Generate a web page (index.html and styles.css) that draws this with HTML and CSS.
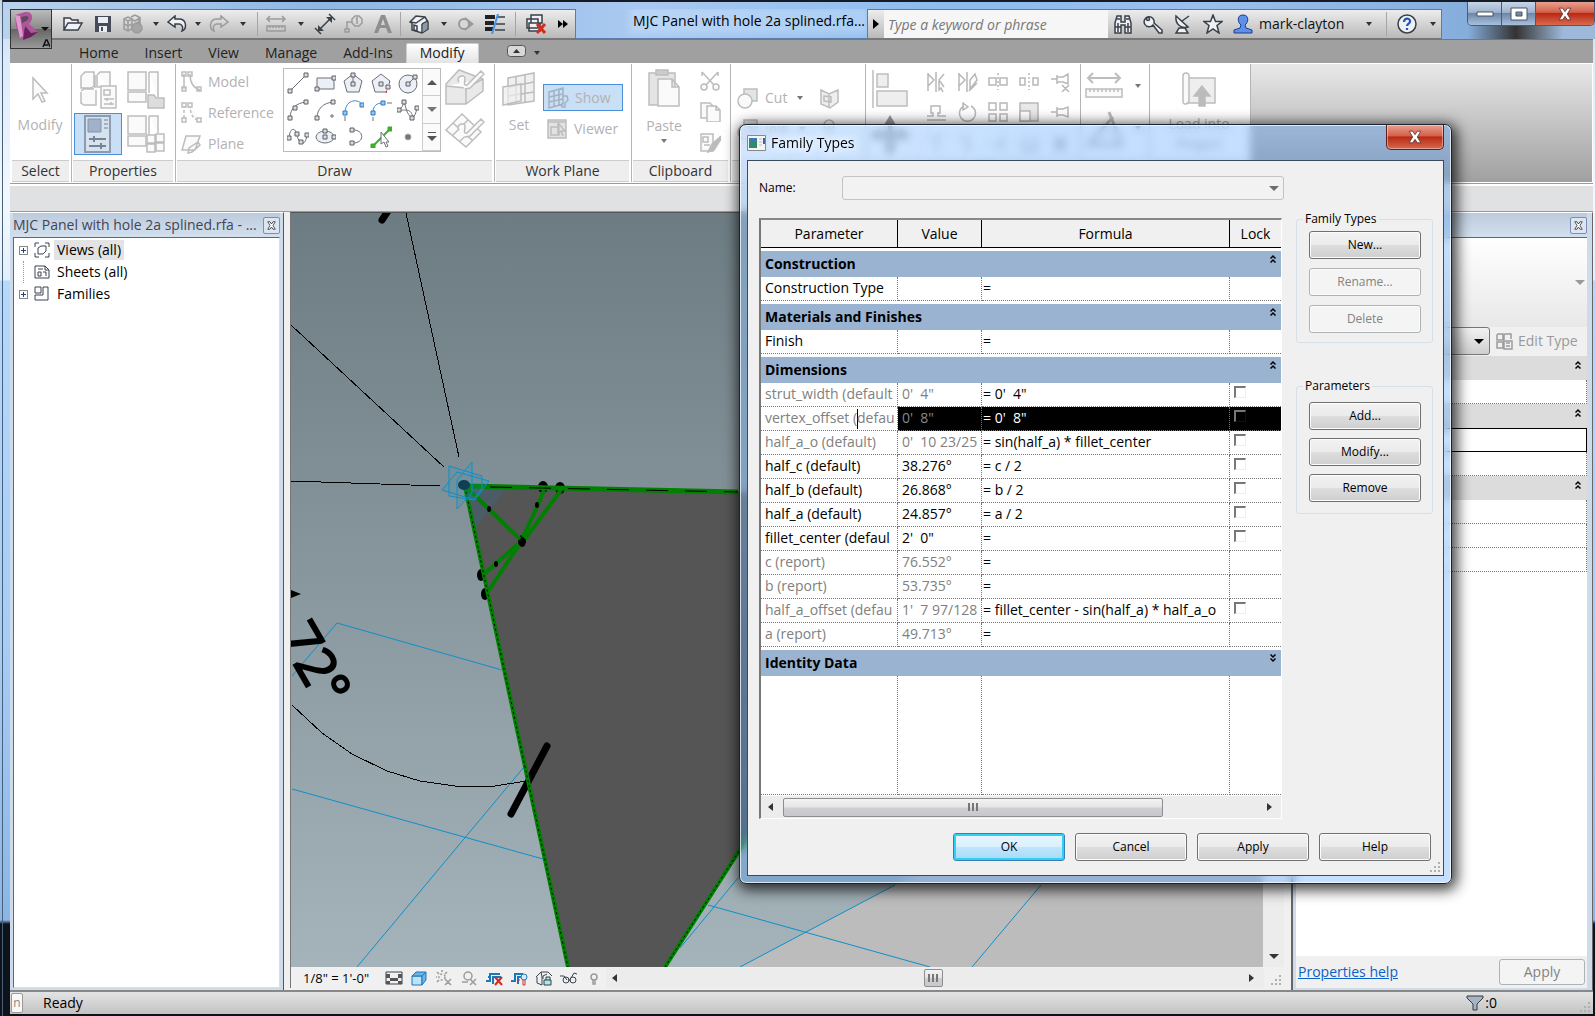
FILE: index.html
```html
<!DOCTYPE html>
<html lang="en">
<head>
<meta charset="utf-8">
<title>MJC Panel with hole 2a splined.rfa</title>
<link rel="stylesheet" href="styles.css">
</head>
<body>
<svg class="defs" aria-hidden="true">
  <symbol id="chev" viewBox="0 0 6 10"><path d="M.5 4.500L3 2l2.500 2.500M.5 8.500L3 6l2.500 2.500"/></symbol>
  <symbol id="grip" viewBox="0 0 12 12"><path d="M9 1h2v2H9zM5 5h2v2H5zM9 5h2v2H9zM1 9h2v2H1zM5 9h2v2H5zM9 9h2v2H9z"/></symbol>
  <symbol id="cross" viewBox="0 0 12 12"><path d="M1 1h3l2 3 2-3h3L8 6l3 5H8L6 8l-2 3H1l3-5z"/></symbol>
</svg>

<div class="window">
  <header class="titlebar">
    <button class="app-button" aria-label="Application menu"><svg width="38" height="38" viewBox="0 0 38 38"><path d="M3 5l10-3c7-1 10 6 4 12l9 8-7 1-7-7 1 10-4 4-5-14z" fill="#b0559c"/><path d="M9 7l5-1c4 0 4 4-4 7z" fill="#5c4a5a"/><path d="M3 5l5 23 3-2-3-20z" fill="#df9bcf"/><path d="M13 16l6 7 7-1-7 5-8 3z" fill="#6d1f5d"/><path d="M29 17h8l-4 4z" fill="#111"/><path d="M31 37l3-7h1l3 7M32 35h4" fill="none" stroke="#111" stroke-width="1.500"/></svg></button>
    <div class="qat">
      <button class="w30" aria-label="Open"><svg width="22" height="18" viewBox="0 0 22 18"><path d="M2 15V3h6l2 2h6v3M2 15L6 8h14l-4 7z" class="dk fillw"/></svg></button>
      <button class="w30" aria-label="Save"><svg width="20" height="20" viewBox="0 0 20 20"><path d="M2 2h16v16H2z" fill="#454b57"/><path d="M5 3h10v6H5zM6 12h8v6H6z" fill="#e9edf3"/><path d="M8 13h2v4H8z" fill="#454b57"/></svg></button>
      <button class="w28" disabled aria-label="Synchronize"><svg width="22" height="22" viewBox="0 0 22 22" class="gy"><path d="M2 6l4-2 4 2v5l-4 2-4-2zM9 4l4-2 4 2v5l-4 2M2 11v5l4 2 4-2v-5M2 6l4 2 4-2M6 8v10M10 6l3 2 5-3v6"/><circle cx="15" cy="15" r="5" fill="#a5a5a5"/></svg></button>
      <button class="w20" aria-label="Synchronize options"><i class="arr"></i></button>
      <button class="w24" aria-label="Undo"><svg width="20" height="18" viewBox="0 0 20 18"><path d="M1 7l7-6v3h4c8 0 8 10 3 12 2-5-1-7-3-7H8v3z" class="dk fillw"/></svg></button>
      <button class="w20" aria-label="Undo history"><i class="arr"></i></button>
      <button class="w24" disabled aria-label="Redo"><svg width="20" height="18" viewBox="0 0 20 18" class="gy"><path d="M19 7l-7-6v3H8C0 4 0 14 5 16 3 11 6 9 8 9h4v3z"/></svg></button>
      <button class="w24" aria-label="Redo history"><i class="arr"></i></button>
      <span class="sep"></span>
      <button class="w32" disabled aria-label="Measure"><svg width="20" height="18" viewBox="0 0 20 18" class="gy"><path d="M1 4h18M4 1L1 4l3 3M16 1l3 3-3 3M1 11h18v5H1zM4 11v2M7 11v2M10 11v2M13 11v2M16 11v2"/></svg></button>
      <button class="w20" aria-label="Measure options"><i class="arr"></i></button>
      <button class="w28" aria-label="Aligned dimension"><svg width="22" height="22" viewBox="0 0 22 22"><path d="M4 18L18 4M1 15l6 6M15 1l6 6" class="dk"/><path d="M4 18v-6l6 6zM18 4v6l-6-6z" fill="#3a3f48"/></svg></button>
      <button class="w28" disabled aria-label="Tag"><svg width="20" height="18" viewBox="0 0 20 18" class="gy"><path d="M8 4l3-3h4l3 3v4l-3 3h-4L8 8zM8 7H3v7M1 14h4v3H1zM12 4l1-1v6"/></svg></button>
      <button class="w30" disabled aria-label="Text"><svg width="18" height="20" viewBox="0 0 18 20"><path d="M0 19L7 1h4l7 18h-4l-2-5H6l-2 5zM7 11h4L9 5z" fill="#8f8f8f" fill-rule="evenodd"/></svg></button>
      <span class="sep"></span>
      <button class="w32" aria-label="Default 3D view"><svg width="20" height="20" viewBox="0 0 20 20"><path d="M1 8l6-6 9 1 3 5v7l-6 4-10-3V9z" class="dk fillw"/><path d="M1 8l6 1 9-6M13 10l6-3M13 10v9M5 11v5l3 1v-5z" class="dk"/><path d="M14 10l4-2v7l-4 3z" fill="#8d98a8"/></svg></button>
      <button class="w20" aria-label="3D view options"><i class="arr"></i></button>
      <button class="w24" disabled aria-label="Section"><svg width="18" height="18" viewBox="0 0 18 18"><path d="M9 2l9 7-9 7z" fill="#999"/><circle cx="8" cy="9" r="5" fill="#d8d8d8" stroke="#999" stroke-width="2"/></svg></button>
      <button class="w36" aria-label="Thin lines"><svg width="22" height="20" viewBox="0 0 22 20"><path d="M1 3h10M1 9h9M1 15h8" stroke="#222" stroke-width="4"/><path d="M13 3h8M12 10h9M11 16h10" class="dk"/><path d="M14 0L8 20" stroke="#3c97ea" stroke-width="2"/></svg></button>
      <span class="sep"></span>
      <button class="w36" aria-label="Close hidden windows"><svg width="22" height="20" viewBox="0 0 22 20"><path d="M6 1h11v8H6zM2 5h11v9H2zM4 9h11v8H4z" class="dk fillw"/><path d="M12 10l8 9M20 10l-8 9" stroke="#d32b1e" stroke-width="3"/></svg></button>
      <button class="w20" aria-label="More"><svg width="10" height="8" viewBox="0 0 10 8"><path d="M0 0l5 4-5 4zM5 0l5 4-5 4z"/></svg></button>
    </div>
    <h1 class="title"><span>MJC Panel with hole 2a splined.rfa...</span></h1>
    <div class="infocenter">
      <button class="w16" aria-label="Collapse search"><svg width="6" height="10" viewBox="0 0 6 10"><path d="M0 0l6 5-6 5z"/></svg></button>
      <input type="text" placeholder="Type a keyword or phrase" aria-label="Search">
      <button class="w30" aria-label="Find"><svg width="20" height="20" viewBox="0 0 20 20"><path d="M2 9l2-7h4v6h4V2h4l2 7v10h-6v-8H8v8H2z" class="dk fillw"/><path d="M2 13h6M12 13h6M4 5h3M13 5h3M5 9v9M15 9v9" class="dk"/></svg></button>
      <button class="w30" aria-label="Subscription"><svg width="20" height="20" viewBox="0 0 20 20"><path d="M10 11a5 5 0 1 1 1-2l8 7v3h-3z" class="dk fillw"/><circle cx="5" cy="5" r="1.500" class="dk"/></svg></button>
      <button class="w30" aria-label="Communication center"><svg width="20" height="20" viewBox="0 0 20 20"><path d="M3 2c-1 8 5 13 12 11zM9 7l7-5M6 14h6l3 5H3z" class="dk fillw"/></svg></button>
      <button class="w30" aria-label="Favorites"><svg width="20" height="20" viewBox="0 0 20 20"><path d="M10 1l2.500 6.500H19l-5 4 2 7.500-6-4-6 4 2-7.500-5-4h6.500z" class="dk fillw"/></svg></button>
      <button class="user" aria-label="Account"><svg width="20" height="20" viewBox="0 0 20 20"><path d="M10 1c7 0 5 8 2 10l1 3 6 2v3H1v-3l6-2 1-3C5 9 3 1 10 1z" fill="#5d90ea" stroke="#1d3f8c"/></svg><span>mark-clayton</span><i class="arr"></i></button>
      <span class="sep"></span>
      <button class="w36" aria-label="Help"><svg width="20" height="20" viewBox="0 0 20 20"><circle cx="10" cy="10" r="9" class="dk fillw"/><path d="M7 8c0-5 7-4 6 0-1 2-3 2-3 4M10 14v2" fill="none" stroke="#2455b8" stroke-width="2.200"/></svg></button>
      <button class="w16" aria-label="Help options"><i class="arr"></i></button>
    </div>
    <div class="caption">
      <button class="min" aria-label="Minimize"><svg width="18" height="6" viewBox="0 0 18 6"><path d="M1 1h16v4H1z" fill="#fff" stroke="#4a5260"/></svg></button>
      <button class="min" aria-label="Maximize"><svg width="18" height="14" viewBox="0 0 18 14"><path d="M1 1h16v12H1zM6 5h6v4H6z" fill="#fff" stroke="#4a5260" fill-rule="evenodd"/></svg></button>
      <button class="close" aria-label="Close"><svg width="16" height="14" viewBox="0 0 12 12"><use href="#cross"/></svg></button>
    </div>
  </header>

  <nav class="tabs">
    <a href="#home">Home</a><a href="#insert">Insert</a><a href="#view">View</a><a href="#manage">Manage</a><a href="#addins">Add-Ins</a><a href="#modify" class="on">Modify</a>
    <button aria-label="Minimize ribbon"><svg width="19" height="12" viewBox="0 0 19 12"><rect x=".5" y=".5" width="18" height="11" rx="3" fill="#d8d8d8" stroke="#555"/><path d="M6 8h7L9.500 4z" fill="#333"/></svg></button>
    <i class="arr"></i>
  </nav>

  <div class="ribbon">
    <section class="panel p-select">
      <div class="tools"><button class="big" disabled><svg width="20" height="28" viewBox="0 0 20 28" class="rb"><path d="M3 2v21l5-5 4 8 3-1-4-8h6z"/></svg><span>Modify</span></button></div>
      <h2>Select</h2>
    </section>
    <section class="panel p-props">
      <div class="tools grid22">
        <button disabled aria-label="Type properties"><svg width="38" height="38" viewBox="0 0 38 38" class="rb"><path d="M3 4l3-3h9v14l-3 2H2V5zM18 4l3-3h10v14M18 4v12h4M2 20l3-2h10M2 21v11l3 2h12V19M16 4v13"/><path d="M22 15h15v22H22z"/><path d="M25 19h6v5h-6zM25 28h10M28 27v3M25 33h10M32 31v3"/></svg></button>
        <button disabled aria-label="Family category"><svg width="40" height="38" viewBox="0 0 40 38" class="rb"><path d="M2 1h18v18H2zM23 1h9v25M23 1v21M2 21h18v10H2z"/><path d="M22 24h6l2 3h8v10H22z" fill="#ddd"/></svg></button>
        <button class="sel" aria-label="Properties"><svg width="30" height="38" viewBox="0 0 30 38"><path d="M2 1h25v36H2z" fill="#d7e2ee" stroke="#8c9cb0" stroke-width="2"/><path d="M5 4h13v13H5z" fill="#9fb2c9" stroke="#8394a8"/><path d="M21 5h4M21 9h4M21 13h4" stroke="#9fb2c9" stroke-width="2"/><path d="M6 24h17M6 31h17M11 21v6M18 28v6" stroke="#73849a" stroke-width="2"/></svg></button>
        <button disabled aria-label="Family types"><svg width="40" height="38" viewBox="0 0 40 38" class="rb"><path d="M2 1h18v18H2zM23 1h9v17M23 1v21M2 21h18v10H2z"/><path d="M21 20h8v8h-8zM30 19h8v8h-8zM21 29h8v8h-8zM30 28h8v8h-8z"/></svg></button>
      </div>
      <h2>Properties</h2>
    </section>
    <section class="panel p-draw">
      <div class="tools">
        <div class="stack">
          <button disabled><svg width="22" height="22" viewBox="0 0 22 22" class="rb"><path d="M4 3v15M10 3c0 9 3 14 10 16M2 1h4v4H2zM2 16h4v4H2zM8 1h4v4H8zM17 16h4v4h-4z"/></svg>Model</button>
          <button disabled><svg width="22" height="22" viewBox="0 0 22 22" class="rb"><path d="M4 3v15M10 3c0 9 3 14 10 16" stroke-dasharray="3 2"/><path d="M2 1h4v4H2zM2 16h4v4H2zM8 1h4v4H8zM17 16h4v4h-4z"/></svg>Reference</button>
          <button disabled><svg width="22" height="22" viewBox="0 0 22 22" class="rb"><path d="M6 3h14l-5 14H2zM8 20l1-5 9-6 2 3-8 7z"/></svg>Plane</button>
        </div>
        <div class="gallery">
          <div class="cells">
            <button aria-label="Line"><svg class="dr"><path d="M3 19L19 3"/><path d="M1 17h4v4H1zM17 1h4v4h-4z" class="n"/></svg></button>
            <button aria-label="Rectangle"><svg class="dr"><path d="M3 6h17v11H3z" fill="#eceff5"/><path d="M18 4h4v4h-4zM1 15h4v4H1z" class="n"/></svg></button>
            <button aria-label="Inscribed polygon"><svg class="dr"><path d="M11 2l9 7-3 11H5L2 9zM11 3v9" fill="#eceff5"/><path d="M9 1h4v4H9zM9 10h4v4H9z" class="n"/></svg></button>
            <button aria-label="Circumscribed polygon"><svg class="dr"><path d="M17 20H5L2 9l9-7 9 7" fill="#eceff5"/><path d="M20 9l-4 12" stroke="#e02020" stroke-dasharray="3 2"/><path d="M9 10h4v4H9zM16 13h4v4h-4z" class="n"/></svg></button>
            <button aria-label="Circle"><svg class="dr"><circle cx="11" cy="12" r="9" fill="#eceff5"/><path d="M11 12l7-7"/><path d="M9 10h4v4H9zM16 3h4v4h-4z" class="n"/></svg></button>
            <button aria-label="Start-end-radius arc"><svg class="dr"><path d="M3 19C3 10 9 4 19 3"/><path d="M1 17h4v4H1zM6 7h4v4H6zM17 1h4v4h-4z" class="n"/></svg></button>
            <button aria-label="Center-ends arc"><svg class="dr"><path d="M3 19C3 10 9 4 19 3M18 15v4M16 17h4"/><path d="M1 17h4v4H1zM17 1h4v4h-4z" class="n"/></svg></button>
            <button aria-label="Tangent end arc"><svg class="dr"><g stroke="#3a87d6"><path d="M3 13C4-1 18 0 20 6"/><path d="M1 12h4v4H1zM18 4h4v4h-4z" class="n b"/></g><path d="M3 17v5"/></svg></button>
            <button aria-label="Fillet arc"><svg class="dr"><g stroke="#3a87d6"><path d="M3 13c0-6 4-9 9-9"/><path d="M1 12h4v4H1zM11 2h4v4h-4z" class="n b"/></g><path d="M3 18v4M17 4h5"/></svg></button>
            <button aria-label="Spline"><svg class="dr"><path d="M2 11c4-3 4-6 5-8 2 4 2 12 8 16 3-2 4-5 5-10M2 11c6 1 12-3 14 8"/><path d="M0 9h4v4H0zM5 1h4v4H5zM13 17h4v4h-4zM18 7h4v4h-4z" class="n"/></svg></button>
            <button aria-label="Spline through points"><svg class="dr"><path d="M2 12C3 0 9 2 10 9s8 14 10 0"/><path d="M0 10h4v4H0zM8 6h4v4H8zM12 14h4v4h-4zM18 7h4v4h-4z" class="n"/></svg></button>
            <button aria-label="Ellipse"><svg class="dr"><ellipse cx="11" cy="11" rx="9" ry="6" fill="#eceff5"/><path d="M9 9h4v4H9zM9 3h4v4H9zM18 9h4v4h-4z" class="n"/></svg></button>
            <button aria-label="Partial ellipse"><svg class="dr"><path d="M10 4c13-1 13 14 0 13"/><path d="M8 2h4v4H8zM8 15h4v4H8z" class="n"/></svg></button>
            <button aria-label="Pick lines"><svg class="dr"><path d="M3 20L20 3" stroke="#3fae2a" stroke-width="2"/><path d="M1 18h4v4H1zM18 1h4v4h-4z" fill="#3fae2a" stroke="#3fae2a"/><path d="M11 6v12l3-2 2 5 2-1-2-4h3z" fill="#fff"/></svg></button>
            <button aria-label="Point"><svg class="dr"><circle cx="11" cy="11" r="3" fill="#777" stroke="#aaa"/></svg></button>
          </div>
          <div class="scroll"><button aria-label="Scroll up"><i class="arr up"></i></button><button aria-label="Scroll down"><i class="arr lg"></i></button><button aria-label="Expand"><svg width="10" height="9" viewBox="0 0 10 9"><path d="M1 0h8v1H1zM0 4h10L5 9z" fill="#555"/></svg></button></div>
        </div>
        <div class="duo">
          <button disabled aria-label="Draw on face"><svg width="40" height="38" viewBox="0 0 40 38" class="rb"><path d="M1 16L14 2l24 9v12L21 36H1zM1 18l20 2 17-9M21 20v16" fill="#e9e9e9"/><path d="M14 14c-4-6 6-8 6-4s-2 8 2 7l14-14 3 3-14 14-5 1"/></svg></button>
          <button disabled aria-label="Draw on work plane"><svg width="40" height="38" viewBox="0 0 40 38" class="rb"><path d="M1 18L17 2l19 18-15 15zM8 11l20 18M14 30l16-15M7 24L23 8"/><path d="M14 18c-4-6 6-8 6-4s-2 8 2 7L36 7l3 3-14 14-5 1"/></svg></button>
        </div>
      </div>
      <h2>Draw</h2>
    </section>
    <section class="panel p-wp">
      <div class="tools">
        <button class="big" disabled><svg width="36" height="36" viewBox="0 0 36 36" class="rb"><path d="M7 7l26-5v28L7 34zM7 16l26-5M7 25l26-4M15 6v27M24 4v28" fill="#f0f0f0"/><path d="M2 16l18-3v17L2 34z" fill="#eee" fill-opacity=".7"/></svg><span>Set</span></button>
        <div class="stack two">
          <button class="sel"><svg width="22" height="22" viewBox="0 0 22 22" class="rb hl"><path d="M2 5l14-4v16L2 21zM2 10l14-3M2 15l14-3M7 4v15M12 3v15M16 9h4l1 4-3 3v4h-3v-4"/></svg>Show</button>
          <button disabled><svg width="22" height="22" viewBox="0 0 22 22" class="rb"><path d="M2 2h18v18H2zM2 4h18M5 9h8v8H5zM12 5v10l3-2 2 5M12 5l7 8h-4" fill="#e2e2e2"/></svg>Viewer</button>
        </div>
      </div>
      <h2>Work Plane</h2>
    </section>
    <section class="panel p-clip">
      <div class="tools">
        <button class="big" disabled><svg width="34" height="38" viewBox="0 0 34 38" class="rb"><path d="M2 4h26v32H2z" fill="#e4e4e4"/><path d="M9 1h12v5H9z" fill="#ccc"/><path d="M11 10h14l7 8v19H11zM25 10v8h7"/></svg><span>Paste</span><i class="arr"></i></button>
        <div class="stack three">
          <button disabled aria-label="Cut to clipboard"><svg width="20" height="20" viewBox="0 0 20 20" class="rb"><path d="M2 1l12 13M18 1L6 14M2 1v4M18 1v4"/><circle cx="4" cy="16" r="3"/><circle cx="16" cy="16" r="3"/></svg></button>
          <button disabled aria-label="Copy to clipboard"><svg width="22" height="20" viewBox="0 0 22 20" class="rb"><path d="M1 1h9l3 3v12H1z"/><path d="M7 4h9l4 4v12H7zM16 4v4h4"/></svg></button>
          <button disabled aria-label="Match type"><svg width="22" height="20" viewBox="0 0 22 20" class="rb"><path d="M1 1h12v17H1zM3 4h5v5H3zM4 12h6"/><path d="M21 3l-9 8-4 8 6-2 7-11" fill="#bbb"/></svg></button>
        </div>
      </div>
      <h2>Clipboard</h2>
    </section>
    <section class="panel p-geo">
      <div class="tools">
        <div class="stack two">
          <button disabled><svg width="22" height="22" viewBox="0 0 22 22" class="rb"><path d="M7 2h13v12H7z" fill="#e4e4e4"/><circle cx="8" cy="14" r="7"/></svg>Cut<i class="arr"></i></button>
          <button disabled><svg width="22" height="22" viewBox="0 0 22 22" class="rb"><path d="M7 2h13v12H7z" fill="#e4e4e4"/><circle cx="8" cy="14" r="7"/></svg>Join<i class="arr"></i></button>
        </div>
        <div class="stack two">
          <button disabled aria-label="Cope"><svg width="22" height="22" viewBox="0 0 22 22" class="rb"><path d="M2 3l8 4 9-4v12l-8 6-9-4zM10 7v13M5 9l7 1v5l-7-1z" fill="#eee"/></svg></button>
          <button disabled aria-label="Paint"><svg width="22" height="22" viewBox="0 0 22 22" class="rb"><circle cx="10" cy="7" r="5"/><path d="M10 8v10"/></svg></button>
        </div>
      </div>
      <h2>Geometry</h2>
    </section>
    <section class="panel p-mod">
      <div class="tools">
        <div class="duo">
          <button disabled aria-label="Align"><svg width="38" height="40" viewBox="0 0 38 40" class="rb"><path d="M2 1v38M6 5h11v13H6zM6 22h30v15H6z" fill="#eee"/></svg></button>
          <button disabled aria-label="Move"><svg width="40" height="40" viewBox="0 0 40 40"><path d="M20 0l6 10h-4v8h8v-4l10 6-10 6v-4h-8v8h4l-6 10-6-10h4v-8h-8v4L0 20l10-6v4h8v-8h-4z" fill="#999"/></svg></button>
        </div>
        <div class="mgrid">
          <button disabled aria-label="Mirror axis"><svg class="mi"><path d="M2 2v18M2 3l6 6-6 6M10 1v20M18 3l-5 6 5 7M13 10v9l2-2 2 4"/></svg></button>
          <button disabled aria-label="Mirror draw"><svg class="mi"><path d="M2 2v18M2 3l6 6-6 6M10 1v20M18 3l-5 6v9l7-9zM12 20l8-8"/></svg></button>
          <button disabled aria-label="Split"><svg class="mi"><path d="M1 7h7v7H1zM12 7h7v7h-7z"/><path d="M10 2v17" stroke-dasharray="2 2"/></svg></button>
          <button disabled aria-label="Split with gap"><svg class="mi"><path d="M1 7h5v7H1zM14 7h5v7h-5z"/><path d="M10 2v17" stroke-dasharray="2 2"/></svg></button>
          <button disabled aria-label="Unpin"><svg class="mi"><path d="M1 8h6M7 4v9M7 6h6l5-3v10l-5-2H7M12 14l7 7M19 14l-7 7"/></svg></button>
          <button disabled aria-label="Offset"><svg class="mi"><path d="M1 14h6v-3H5V4h9v7h-2v3h8M1 18h19"/></svg></button>
          <button disabled aria-label="Rotate"><svg class="mi"><path d="M7 4a8 8 0 1 0 7 0M6 1l5 4-5 3z"/></svg></button>
          <button disabled aria-label="Array"><svg class="mi"><path d="M1 1h7v7H1zM12 1h7v7h-7zM1 12h7v7H1zM12 12h7v7h-7z"/></svg></button>
          <button disabled aria-label="Scale"><svg class="mi"><path d="M1 1h18v18H1z" fill="#e8e8e8"/><path d="M1 9h10v10H1z" fill="#fff"/></svg></button>
          <button disabled aria-label="Pin"><svg class="mi"><path d="M1 10h6M7 5v10M7 7h6l5-2v10l-5-2H7"/></svg></button>
          <button disabled aria-label="Trim"><svg class="mi"><path d="M2 4h8v14M12 4h5"/></svg></button>
          <button disabled aria-label="Extend"><svg class="mi"><path d="M2 4h8v14M12 14h5"/></svg></button>
          <button disabled aria-label="Trim extend"><svg class="mi"><path d="M15 2v17M2 12h11"/></svg></button>
          <button disabled aria-label="Multiple"><svg class="mi"><path d="M4 4v14h14V4M11 4v14"/></svg></button>
          <button disabled aria-label="Delete element"><svg class="mi"><path d="M4 4l12 14M16 4L4 18" stroke-width="3"/></svg></button>
        </div>
      </div>
      <h2>Modify</h2>
    </section>
    <section class="panel p-meas">
      <div class="tools">
        <div class="duo">
          <button disabled><svg width="38" height="34" viewBox="0 0 38 34" class="rb"><path d="M3 9h32M8 4L3 9l5 5M30 4l5 5-5 5" stroke-width="2"/><path d="M1 20h36v8H1zM5 20v3M9 20v3M13 20v3M17 20v3M21 20v3M25 20v3M29 20v3M33 20v3"/></svg><i class="arr"></i></button>
          <button disabled><svg width="38" height="38" viewBox="0 0 38 38" class="rb"><path d="M3 36h34L24 3M3 36L28 8" stroke-width="3"/></svg><i class="arr"></i></button>
        </div>
      </div>
      <h2>Measure</h2>
    </section>
    <section class="panel p-load">
      <div class="tools"><button class="big" disabled><svg width="38" height="36" viewBox="0 0 38 36" class="rb"><path d="M8 6h27v25H8z" fill="#eee"/><path d="M3 30V4c0-4 6-4 6 0v24c0 5-6 5-6 2z"/><path d="M22 14l8 10h-5v10h-6V24h-5z" fill="#bbb"/></svg><span>Load into</span><span>Project</span></button></div>
      <h2>Family Editor</h2>
    </section>
    <div class="rest"></div>
  </div>
  <div class="options"></div>

  <main class="work">
    <aside class="browser">
      <header><h2>MJC Panel with hole 2a splined.rfa - ...</h2><button class="x" aria-label="Close browser"><svg width="9" height="9" viewBox="0 0 12 12"><use href="#cross"/></svg></button></header>
      <ul class="tree">
        <li><i class="plus"></i><svg width="16" height="16" viewBox="0 0 16 16"><path d="M1 5V1h4M11 1h4v4M15 11v4h-4M5 15H1v-4" class="tn"/><path d="M4 6l3-2h5v5l-3 3H4z" class="tn"/></svg><span class="cur">Views (all)</span></li>
        <li><i class="nub"></i><svg width="16" height="16" viewBox="0 0 16 16"><path d="M1 2h10l4 4v8H1zM11 2v4h4M4 5h5M4 8v4h3V8zM9 8h3v4" class="tn"/></svg><span>Sheets (all)</span></li>
        <li><i class="plus"></i><svg width="16" height="16" viewBox="0 0 16 16"><path d="M1 1h6v6H1zM9 1h5v13H1V9h8z" class="tn"/></svg><span>Families</span></li>
      </ul>
    </aside>

    <section class="view">
      <div class="stage">
        <svg class="canvas" viewBox="291 213 974 754" preserveAspectRatio="xMinYMin slice" role="img" aria-label="3D view">
          <defs><linearGradient id="sky" x1="0" y1="0" x2="0" y2="1"><stop offset="0" stop-color="#6d7c82"/><stop offset="1" stop-color="#a5b4ba"/></linearGradient></defs>
          <rect x="291" y="213" width="974" height="754" fill="url(#sky)"/>
          <path d="M740 967L895 885 1265 690v277z" fill="#bcbcbc"/>
          <g class="cy"><path d="M292 676l45-53 165 47M292 789l251 70M524 767L357 967M708 905l222 62M738 878L680 948M895 885L740 967M1041 885L972 967"/></g>
          <path d="M465 486l435 9v105L665 967h-97z" fill="#555"/>
          <path d="M465 487l40 2-30 40z" fill="#4b5c66"/>
          <g class="bk" shape-rendering="crispEdges"><path d="M406 213l53 244M291 325l153 142M291 481l149 5M292 705l30 28 30 21 35 17 33 10 35 5h40l31-5"/></g>
          <path d="M547 746l-36 68M388 211l-6 9" stroke="#000" stroke-width="7" stroke-linecap="round"/>
          <path d="M291 590l10 4-10 4z"/>
          <g><ellipse cx="543" cy="487" rx="5" ry="6"/><ellipse cx="560" cy="488" rx="5" ry="6"/><ellipse cx="522" cy="541" rx="4" ry="6"/><ellipse cx="481" cy="575" rx="4" ry="6"/><ellipse cx="485" cy="594" rx="4" ry="6"/></g>
          <g class="gn"><path d="M465 486l273 6" stroke-width="5"/><path d="M465 487l103 480M665 967l90-141" stroke-width="4"/><path d="M465 486l55 53M518 544l-34 30M544 490l-6 15-15 32M561 490l-36 49M519 545l-32 48" stroke-width="4"/></g>
          <path d="M465 487l103 480M665 967l90-141" stroke="#000" stroke-dasharray="2 3" fill="none"/>
          <path d="M490 487l248 5" stroke="#000" stroke-dasharray="22 17" fill="none"/>
          <g><ellipse cx="489" cy="509" rx="2" ry="3"/><ellipse cx="537" cy="505" rx="2" ry="3"/><ellipse cx="496" cy="564" rx="2" ry="3"/><ellipse cx="464" cy="485" rx="6" ry="5" fill="#0c2c3c"/></g>
          <path d="M449 466l33 10v12l-9 12-24-4zM442 490l15-18 32 9-14 19zM472 462v31l-15 16v-29z" fill="#1f93c4" fill-opacity=".18" stroke="#0d8fca"/>
          <text x="277" y="636" transform="rotate(60 277 636)" class="dim">72°</text>
        </svg>
        <div class="vscroll"><i class="arr lg"></i></div>
      </div>
      <div class="viewbar">
        <span class="scale">1/8" = 1'-0"</span>
        <button aria-label="Detail level"><svg class="vb"><path d="M1 3h16v12H1z" class="tn"/><path d="M1 5h4v4H1zM13 5h4v4h-4zM5 9h8v3H5zM1 12h4v3H1zM13 12h4v3h-4z" fill="#555"/></svg></button>
        <button aria-label="Visual style"><svg class="vb"><path d="M2 7h10v9H2z" fill="#bfe1fa" stroke="#1f77b8"/><path d="M2 7l4-4h10l-4 4zM12 7l4-4v8l-4 5z" fill="#6ab4e8" stroke="#1f77b8"/></svg></button>
        <button disabled aria-label="Sun path"><svg class="vb"><g class="gy"><circle cx="7" cy="8" r="3" stroke-dasharray="2 2"/><path d="M7 1v2M1 8h1M2 3l2 2M12 3l-2 2M2 13l2-2M10 10l6 6M16 10l-6 6"/></g></svg></button>
        <button disabled aria-label="Shadows"><svg class="vb"><g class="gy"><circle cx="8" cy="7" r="4"/><path d="M2 13h6M10 10l6 6M16 10l-6 6"/></g></svg></button>
        <button aria-label="Crop view"><svg class="vb"><path d="M1 12h4V5h10M5 8H3M8 15V8h8" fill="none" stroke="#1f77b8" stroke-width="2"/><path d="M10 8l7 8M17 8l-7 8" stroke="#d32b1e" stroke-width="2"/></svg></button>
        <button aria-label="Show crop region"><svg class="vb"><path d="M1 12h4V5h8M8 15V8h4" fill="none" stroke="#1f77b8" stroke-width="2"/><circle cx="14" cy="8" r="3" fill="#d7ebff" stroke="#1f77b8"/><path d="M13 11v5h2v-5M8 11h2" stroke="#c33" fill="none"/></svg></button>
        <button aria-label="Lock 3D view"><svg class="vb"><path d="M1 8l5-5h7l4 4M2 8v6l5 2V8L6 3M8 10V7l4-2" class="tn"/><path d="M9 11h7v5H9zM11 11V8h4v3" fill="#bfe3da" stroke="#245"/></svg></button>
        <button aria-label="Temporary hide"><svg class="vb"><path d="M0 7h4l3 4M17 5l-3-1M14 4l-3 5M8 11h3" class="tn"/><circle cx="6" cy="11" r="3" class="tn"/><circle cx="13" cy="11" r="3" class="tn"/></svg></button>
        <button disabled aria-label="Reveal hidden"><svg class="vb"><g class="gy"><circle cx="9" cy="8" r="3"/><path d="M8 11v4h2v-4"/></g></svg></button>
        <div class="hscroll"><i class="tri left"></i><i class="thumb"><b></b></i><i class="tri right"></i></div>
        <svg class="grip" width="12" height="12"><use href="#grip"/></svg>
      </div>
    </section>

    <aside class="props" aria-label="Properties">
      <header><button class="x" aria-label="Close properties"><svg width="9" height="9" viewBox="0 0 12 12"><use href="#cross"/></svg></button></header>
      <div class="type"><i class="arr lg"></i></div>
      <div class="filter"><button class="combo" aria-label="Category"><i class="arr lg"></i></button><button disabled><svg width="17" height="17" viewBox="0 0 17 17" class="gy"><path d="M1 2l1-1h5v6H1zM8 2l1-1h6v5M8 2v5M1 9h6v6H1zM8 8h8v8H8zM10 10h4M10 13h4"/></svg>Edit Type</button></div>
      <div class="g"><svg width="6" height="10"><use href="#chev"/></svg></div><div class="r"></div>
      <div class="g"><svg width="6" height="10"><use href="#chev"/></svg></div><div class="r act"></div><div class="r"></div>
      <div class="g"><svg width="6" height="10"><use href="#chev"/></svg></div><div class="r"></div><div class="r"></div><div class="r"></div>
      <div class="fill"></div>
      <footer><a href="#help">Properties help</a><button disabled>Apply</button></footer>
    </aside>
  </main>

  <footer class="status"><span class="n">n</span><span class="ready">Ready</span><span class="sel-count"><svg width="18" height="16" viewBox="0 0 18 16"><path d="M1 1h16v2l-6 6v6H7V9L1 3z" fill="#a9b3c2" stroke="#333b48"/></svg>:0</span><svg class="grip" width="12" height="12"><use href="#grip"/></svg></footer>
</div>

<div class="dialog" role="dialog" aria-labelledby="dt">
  <header>
    <svg width="20" height="16" viewBox="0 0 20 16"><path d="M.5.5h18v15H.5z" fill="#f4f4f4" stroke="#888"/><path d="M2 3h8v10H2z" fill="#2f8a6d"/><path d="M2 3h8v4H2z" fill="#3d78b0"/><path d="M12 4h3M12 7h3M12 10h3" stroke="#bbb"/><path d="M16 3h2v6h-2z" fill="#3b5f9c"/></svg>
    <h2 id="dt">Family Types</h2>
    <button class="close" aria-label="Close dialog"><svg width="16" height="14" viewBox="0 0 12 12"><use href="#cross"/></svg></button>
  </header>
  <form class="client">
    <div class="name"><label for="nm">Name:</label><div class="pick"><select id="nm" disabled><option></option></select></div></div>
    <div class="cols">
      <div class="sheet">
        <table>
          <colgroup><col class="c1"><col class="c2"><col class="c3"><col class="c4"></colgroup>
          <thead><tr><th>Parameter</th><th>Value</th><th>Formula</th><th>Lock</th></tr></thead>
          <tbody>
            <tr class="grp"><td colspan="4">Construction<svg width="6" height="10"><use href="#chev"/></svg></td></tr>
            <tr><td>Construction Type</td><td></td><td>=</td><td></td></tr>
            <tr class="grp"><td colspan="4">Materials and Finishes<svg width="6" height="10"><use href="#chev"/></svg></td></tr>
            <tr><td>Finish</td><td></td><td>=</td><td></td></tr>
            <tr class="grp"><td colspan="4">Dimensions<svg width="6" height="10"><use href="#chev"/></svg></td></tr>
            <tr class="ro"><td>strut_width (default</td><td>0'&nbsp; 4"</td><td>= 0'&nbsp; 4"</td><td><input type="checkbox" aria-label="Lock strut_width"></td></tr>
            <tr class="ro cursel"><td>vertex_offset (<i class="caret"></i>defau</td><td>0'&nbsp; 8"</td><td>= 0'&nbsp; 8"</td><td><input type="checkbox" aria-label="Lock vertex_offset"></td></tr>
            <tr class="ro"><td>half_a_o (default)</td><td>0'&nbsp; 10 23/25</td><td>= sin(half_a) * fillet_center</td><td><input type="checkbox" aria-label="Lock half_a_o"></td></tr>
            <tr><td>half_c (default)</td><td>38.276°</td><td>= c / 2</td><td><input type="checkbox" aria-label="Lock half_c"></td></tr>
            <tr><td>half_b (default)</td><td>26.868°</td><td>= b / 2</td><td><input type="checkbox" aria-label="Lock half_b"></td></tr>
            <tr><td>half_a (default)</td><td>24.857°</td><td>= a / 2</td><td><input type="checkbox" aria-label="Lock half_a"></td></tr>
            <tr><td>fillet_center (defaul</td><td>2'&nbsp; 0"</td><td>=</td><td><input type="checkbox" aria-label="Lock fillet_center"></td></tr>
            <tr class="ro"><td>c (report)</td><td>76.552°</td><td>=</td><td></td></tr>
            <tr class="ro"><td>b (report)</td><td>53.735°</td><td>=</td><td></td></tr>
            <tr class="ro"><td>half_a_offset (defau</td><td>1'&nbsp; 7 97/128</td><td>= fillet_center - sin(half_a) * half_a_o</td><td><input type="checkbox" aria-label="Lock half_a_offset"></td></tr>
            <tr class="ro"><td>a (report)</td><td>49.713°</td><td>=</td><td></td></tr>
            <tr class="grp"><td colspan="4">Identity Data<svg width="6" height="10" class="down"><use href="#chev"/></svg></td></tr>
            <tr class="blank"><td></td><td></td><td></td><td></td></tr>
          </tbody>
        </table>
        <div class="hs"><i class="tri left"></i><i class="thumb"><b></b></i><i class="tri right"></i></div>
      </div>
      <div class="side">
        <fieldset><legend>Family Types</legend><button type="button">New...</button><button type="button" disabled>Rename...</button><button type="button" disabled>Delete</button></fieldset>
        <fieldset class="params"><legend>Parameters</legend><button type="button">Add...</button><button type="button">Modify...</button><button type="button">Remove</button></fieldset>
      </div>
    </div>
    <div class="actions"><button type="button" class="ok">OK</button><button type="button">Cancel</button><button type="button">Apply</button><button type="button">Help</button></div>
    <svg class="grip" width="12" height="12"><use href="#grip"/></svg>
  </form>
</div>
</body>
</html>
```
FILE: styles.css
```css
* { box-sizing: border-box; }
html, body { height: 100%; }
body { margin: 0; overflow: hidden; font: 14px/20px "Open Sans", "Noto Sans", sans-serif; color: #111;
  background: linear-gradient(#c9d6e4 0, #dcebfc 60px, #f2f8ff 200px, #e4f0fd 280px, #b5d8fd 281px, #a7cdf5 640px, #8ab6e6 920px, #0d121b 924px); }
h1, h2 { margin: 0; font-size: 14px; font-weight: 400; }
button { font: inherit; color: inherit; background: none; border: 0; padding: 0; display: flex; align-items: center; justify-content: center; }
svg { flex: none; }
.defs { position: absolute; width: 0; height: 0; }
.dk { fill: none; stroke: #3a3f48; stroke-width: 1.500; }
.fillw { fill: #eef1f5; }
.gy, .gy path { fill: none; stroke: #9b9b9b; stroke-width: 1.500; }
.rb { fill: #fafafa; stroke: #bdbdbd; stroke-width: 1.500; }
.rb.hl { fill: #cfdeee; stroke: #9fb2c7; }
.tn { fill: none; stroke: #3a4250; stroke-width: 1; }
.arr { flex: none; width: 0; height: 0; border: 3px solid transparent; border-top: 4px solid #333; border-bottom: 0; }
.arr.lg, .arr.up { border-width: 5px; border-bottom-width: 0; }
.arr.up { border-top: 0; border-bottom: 5px solid #555; }
.grip { fill: #b0b0b0; }

.window { display: flex; flex-direction: column; height: 100%; margin-left: 2px; padding: 0 2px 2px 7px; border-top: 2px solid #161a22; border-left: 1px solid #4a6078; }
.titlebar { display: flex; height: 37px; margin: 0 -2px 0 -7px; padding-left: 7px; align-items: flex-end; background: linear-gradient(90deg, #b9d3ee, #8fb8e4 20%, #a9c9f0 40%, #8cbbee 60%, #9cc0ee 75%, #86aedd 92%, #333 95%, #9db8d8 98%); }
.app-button { width: 42px; height: 40px; flex: none; align-self: flex-start; margin: 7px 0 -10px; border: 1px solid #333; background: linear-gradient(#bbb, #888 50%, #666 51%, #999); z-index: 1; position: relative; }
.qat, .infocenter { display: flex; align-items: stretch; height: 30px; border: 1px solid #777; background: linear-gradient(#ededed, #b9b9b9); flex: none; }
.qat { width: 524px; padding-left: 6px; border-left: 0; overflow: hidden; }
.sep { width: 1px; margin: 2px; background: #a5a5a5; flex: none; }
.w16 { width: 16px } .w20 { width: 18px } .w24 { width: 24px } .w28 { width: 29px } .w30 { width: 30px } .w32 { width: 32px } .w36 { width: 36px }
.qat button, .infocenter button { flex: none; }
.title { flex: 1; min-width: 0; height: 30px; overflow: hidden; white-space: nowrap; text-align: right; padding-right: 2px; line-height: 24px; color: #000; border-bottom: 1px solid #5b7ea6; }
.title span { background: rgba(210,230,255,.4); box-shadow: 0 0 8px 4px rgba(210,230,255,.4); }
.infocenter { width: 575px; }
.infocenter input { width: 224px; min-width: 0; border: 0; padding: 0 4px; background: #f6f6f6; font: italic 14px "Open Sans", sans-serif; }
.infocenter input::placeholder { color: #777; opacity: 1; }
.infocenter .user { flex: 1; padding: 0 12px 0 5px; gap: 6px; }
.infocenter .user span { flex: 1; text-align: left; white-space: nowrap; }
.caption { display: flex; align-self: flex-start; margin-left: 25px; height: 24px; border: 1px solid #4c5a70; border-top: 0; border-radius: 0 0 5px 5px; overflow: hidden; flex: none; }
.caption .min { width: 34px; border-right: 1px solid #4c5a70; background: linear-gradient(#c6d6ea, #9fb3cd 45%, #6d87a8 50%, #a7c0de); }
.close { width: 58px; background: linear-gradient(#e8a090, #d4604a 45%, #b92a14 50%, #d66a4e); fill: #fff; stroke: #5b3030; stroke-width: .7; }

.tabs { display: flex; height: 24px; flex: none; align-items: stretch; padding: 3px 0 0 56px; background: #a0a0a0; border-top: 1px solid #777; }
.tabs a { padding: 0 13px; color: #222; text-decoration: none; }
.tabs .on { background: linear-gradient(#fff, #e4e4e4); border: 1px solid #ccc; border-bottom: 0; border-radius: 2px 2px 0 0; line-height: 18px; }
.tabs button { margin: 0 8px 5px 28px; }
.tabs > .arr { align-self: center; }

.ribbon { display: flex; height: 121px; flex: none; padding: 1px; background: #fff; border-bottom: 1px solid #9a9a9a; }
.panel { display: flex; flex-direction: column; border-right: 1px solid #b5b5b5; padding-right: 2px; background: #fff; flex: none; overflow: hidden; }
.panel h2 { height: 22px; margin-left: 1px; text-align: center; background: #eee; border: solid #ccc; border-width: 1px 0; color: #333; line-height: 20px; white-space: nowrap; overflow: hidden; }
.tools { flex: 1; display: flex; padding: 5px 4px 0; color: #b2b2b2; min-height: 0; }
.panel .arr { border-top-color: #777; }
.panel .arr.up { border-top: 0; }
.p-select { width: 61px } .p-props { width: 104px } .p-draw { width: 319px } .p-wp { width: 137px } .p-clip { width: 99px } .p-geo { width: 135px } .p-mod { width: 215px } .p-meas { width: 69px } .p-load { width: 101px }
.big { flex-direction: column; justify-content: flex-start; align-self: flex-start; white-space: nowrap; }
.p-select .big { margin-top: 7px; gap: 11px; }
.p-select .tools { justify-content: center; }
.grid22 { display: grid; grid-template: 46px 42px / 48px 48px; padding: 3px 2px; }
.sel { border: 1px solid #4a90d9; background: #c9dff5; }
.stack { display: flex; flex-direction: column; gap: 9px; padding-top: 3px; }
.stack button { height: 22px; justify-content: flex-start; gap: 6px; white-space: nowrap; }
.p-draw .stack { width: 103px; }
.p-draw .tools { padding: 4px; }
.gallery { display: flex; width: 158px; height: 84px; border: 1px solid #bbb; }
.cells { flex: 1; display: grid; grid-template-columns: repeat(5, 1fr); grid-template-rows: repeat(3, 1fr); }
.dr { width: 22px; height: 22px; fill: none; stroke: #6b7078; stroke-width: 1; }
.dr .n { fill: #ddd; stroke: #5c6068; stroke-width: 1; }
.dr .b { fill: #9cc6f0; stroke: #2d79c8; }
.scroll { width: 18px; display: grid; grid-template-rows: repeat(3, 1fr); border-left: 1px solid #ccc; }
.scroll button { border-bottom: 1px solid #ccc; background: #fafafa; }
.duo { display: flex; flex-direction: column; gap: 6px; }
.p-draw .duo { padding-left: 4px; }
.p-wp .big { width: 40px; gap: 8px; margin: 2px 4px 0 0; }
.two { padding-top: 15px; gap: 4px; }
.two button { height: 27px; padding: 0 5px 0 3px; }
.p-clip .big { width: 56px; gap: 3px; }
.p-clip .big svg { margin-bottom: 6px; }
.p-clip .three { padding: 1px 0 0 8px; }
.p-geo .two { width: 82px; padding-left: 2px; }
.p-geo .two button { padding: 0; }
.p-geo .two .arr { margin-left: 4px; }
.p-geo .two + .two { width: 24px; }
.mgrid { display: grid; grid-template-columns: repeat(5, 31px); grid-auto-rows: 31px; margin: 2px 0 0 11px; align-items: start; justify-items: center; }
.mi { width: 21px; height: 21px; fill: none; stroke: #b8b8b8; stroke-width: 1.500; }
.p-meas .duo button { gap: 12px; }
.p-load .tools { justify-content: center; padding-top: 8px; }
.p-load .big svg { margin-bottom: 6px; }
.rest { flex: 1; background: linear-gradient(#e8e8e8, #a0a0a0); }
.options { height: 28px; flex: none; background: #e0e1e3; border: solid; border-width: 2px 0 1px; border-color: #fff #fff #999; }

.work { flex: 1; display: flex; min-height: 0; background: #f0f0f0; }
.browser { width: 274px; display: flex; flex-direction: column; padding: 0 3px 2px 3px; background: #cddbea; border-right: 1px solid #555; border-top: 1px solid #fff; }
.browser header, .props header { display: flex; height: 24px; align-items: center; flex: none; background: linear-gradient(#bccbdc, #d3e0ee); }
.browser h2 { flex: 1; color: #445; white-space: nowrap; overflow: hidden; }
.x { width: 17px; height: 17px; border: 1px solid #7d8db5; background: #dce6f2; border-radius: 2px; fill: #fff; stroke: #222; stroke-width: 1; }
.tree { flex: 1; margin: 0; padding: 1px 5px; list-style: none; background: #fff; border: 1px solid #666; border-right-color: #ddd; border-bottom-color: #ddd; }
.tree li { display: flex; align-items: center; height: 22px; gap: 6px; color: #000; }
.tree span { padding: 0 3px; margin-left: -2px; }
.cur { background: #e3e3e3; }
.plus { width: 9px; height: 9px; border: 1px solid #888; background: linear-gradient(#247, #247) center / 5px 1px no-repeat, linear-gradient(#247, #247) center / 1px 5px no-repeat; }
.nub { width: 9px; height: 22px; border-left: 1px dotted #999; margin: 0 -4px 0 4px; }

.view { flex: 1; min-width: 0; display: flex; flex-direction: column; margin: 0 0 2px 6px; border-left: 1px solid #777; border-top: 1px solid #555; }
.stage { flex: 1; min-height: 0; display: flex; }
.canvas { flex: 1; min-width: 0; width: 0; height: 100%; background: #a5b4ba; }
.cy { fill: none; stroke: #0d8fca; }
.bk { fill: none; stroke: #000; }
.gn { fill: none; stroke: #008000; }
.dim { font: 54px "Open Sans", sans-serif; stroke: #000; stroke-width: 2; }
.vscroll { width: 21px; background: #ececec; display: flex; justify-content: center; align-items: flex-end; padding-bottom: 8px; }
.viewbar { display: flex; height: 21px; flex: none; align-items: center; background: #f0f0f0; }
.scale { width: 90px; padding-left: 12px; font-size: 13px; color: #000; }
.viewbar button { width: 25px; }
.vb { width: 18px; height: 18px; }
.hscroll, .hs { display: flex; align-items: center; justify-content: space-between; background: #ececec; }
.hscroll { flex: 1; height: 20px; padding: 0 10px 0 6px; margin-right: 6px; }
.viewbar .grip { margin: 4px 2px 0 0; }
.tri { width: 0; height: 0; border: 4px solid transparent; }
.tri.left { border-right: 5px solid #333; border-left: 0; }
.tri.right { border-left: 5px solid #333; border-right: 0; }
.thumb { display: flex; width: 19px; height: 18px; align-items: center; justify-content: center; border: 1px solid #8e8e8e; border-radius: 2px; background: linear-gradient(#f3f3f3, #e4e4e6 48%, #cfcfd3 52%, #c8c8cc); }
.thumb b { width: 10px; height: 8px; background: repeating-linear-gradient(90deg, #777 0 2px, transparent 2px 4px); }

.props { width: 302px; margin-left: 7px; display: flex; flex-direction: column; padding: 0 5px 2px 3px; border-left: 2px solid #666; border-right: 1px solid #666; background: #cddbea; border-top: 1px solid #fff; color: #999; }
.props header { justify-content: flex-end; height: 25px; border-bottom: 1px solid #666; }
.type { height: 89px; flex: none; display: flex; justify-content: flex-end; align-items: center; padding-right: 2px; background: linear-gradient(#fff, #e8e8e8); }
.type .arr { border-top-color: #999; }
.filter { display: flex; height: 29px; flex: none; padding-bottom: 1px; background: #f0f0f0; }
.filter button { gap: 5px; }
.combo { width: 194px; justify-content: flex-end; padding-right: 5px; margin-right: 6px; border: 1px solid #777; border-radius: 3px; background: linear-gradient(#f2f2f2, #cfcfcf); }
.combo .arr { border-top-color: #000; }
.g { height: 24px; flex: none; padding: 4px 6px; text-align: right; background: #dcdcdc; line-height: 10px; }
.g svg, .grp svg { fill: none; stroke: #000; stroke-width: 1.500; }
.r { height: 24px; flex: none; background: #fff; border: dotted #777; border-width: 0 1px 1px 0; }
.act { border: 1px solid #000; }
.fill { flex: 1; background: #fff; }
.props > footer { display: flex; height: 32px; flex: none; align-items: center; justify-content: space-between; padding: 0 2px; background: #f0f0f0; }
.props a { color: #0b5fcc; }
.props footer button { width: 86px; height: 26px; border: 1px solid #adb2b5; border-radius: 3px; background: #f4f4f4; color: #838383; }
.status { display: flex; height: 24px; flex: none; align-items: center; padding: 0 2px 0 1px; background: linear-gradient(#e3e3e3, #c2c2c2); border-top: 2px solid #888; color: #000; }
.status .n { width: 12px; height: 20px; border: 1px solid #999; border-radius: 2px; background: #f8f8f8; color: #888; font-size: 12px; text-align: center; line-height: 18px; }
.ready { flex: 1; padding-left: 20px; }
.sel-count { display: flex; align-items: center; gap: 1px; padding-right: 82px; line-height: 22px; }
.status .grip { margin-top: 8px; }

.dialog { position: absolute; left: 739px; right: 143px; top: 124px; padding: 0 7px 7px; border: 1px solid #1c2430; border-radius: 7px; color: #000; font-size: 12px;
  background: linear-gradient(110deg, rgba(255,255,255,.25), transparent 30%), rgba(70,155,255,.32); backdrop-filter: blur(4px); box-shadow: inset 0 0 0 1px rgba(255,255,255,.7), 2px 3px 14px 3px rgba(0,0,0,.75); }
.dialog > header { display: flex; height: 35px; align-items: center; gap: 4px; }
.dialog > header h2 { flex: 1; text-shadow: 0 0 8px #fff, 0 0 8px #fff; }
.dialog .close { align-self: flex-start; height: 25px; width: 58px; border: 1px solid #5b2020; border-top: 0; border-radius: 0 0 5px 5px; box-shadow: inset 0 0 0 1px rgba(255,255,255,.4); }
.client { position: relative; display: flex; flex-direction: column; padding: 15px 12px 14px 11px; background: #f0f0f0; border: 1px solid #3b4a5c; }
.client > .grip { position: absolute; right: 2px; bottom: 2px; }
.name { display: flex; height: 24px; align-items: center; margin-bottom: 18px; }
.name label { width: 83px; }
.pick { width: 442px; height: 24px; position: relative; }
.pick::after { content: ""; position: absolute; right: 5px; top: 10px; border: 5px solid transparent; border-top-color: #6d6d6d; border-bottom: 0; }
.pick select { appearance: none; width: 100%; height: 100%; border: 1px solid #adb2b5; border-radius: 3px; background: #f4f4f4; }
.cols { display: flex; justify-content: space-between; }
.sheet { width: 523px; font-size: 14px; background: #fff; border: solid; border-width: 2px 1px 1px 2px; border-color: #888 #fff #fff #777; }
table { table-layout: fixed; width: 100%; border-spacing: 0; }
.c1 { width: 137px } .c2 { width: 84px } .c4 { width: 51px }
th { height: 28px; padding: 0; font-weight: 400; background: #f0f0f0; border-right: 1px solid #000; border-bottom: 1px solid #000; }
th:last-child { border-right: 0; }
td { height: 24px; padding: 0 0 1px 4px; line-height: 22px; overflow: hidden; white-space: nowrap; border: dotted #777; border-width: 0 1px 1px 0; }
td:last-child { border-right: 0; }
td:nth-child(3) { padding-left: 1px; }
td:nth-child(4) { vertical-align: top; }
.ro td:nth-child(-n+2) { color: #808080; }
.cursel td:nth-child(n+2) { background: #000; color: #fff; }
.cursel td:nth-child(2) { color: #888; }
.caret { display: inline-block; width: 1px; height: 20px; margin-right: -1px; background: #000; vertical-align: middle; }
.grp td { height: 29px; padding-bottom: 0; line-height: 26px; font-weight: 700; background: #9ab3d1; border: 0; border-top: 3px solid #fff; }
.grp svg { float: right; margin: 3px 5px; }
.grp .down { transform: rotate(180deg); }
.blank td { height: 119px; }
td input { appearance: none; display: block; width: 12px; height: 12px; margin: 3px 0 0; border: 1px solid #eee; border-top: 2px solid #777; border-left: 2px solid #777; }
.cursel input { border-right-color: #111; border-bottom-color: #111; }
.hs { height: 22px; padding: 0 9px 0 7px; margin-top: 1px; }
.hs .thumb { width: 380px; height: 19px; margin: 0 95px 0 0; }
.hs .thumb, .hs .tri { flex: none; }
.side { width: 137px; margin-right: -2px; display: flex; flex-direction: column; gap: 42px; }
fieldset { display: flex; flex-direction: column; gap: 9px; margin: -8px 0 0; padding: 3px 12px 9px; min-width: 0; border: 1px solid #d5dfe5; border-radius: 3px; }
.params { padding-top: 7px; padding-bottom: 11px; gap: 8px; }
legend { padding: 0 2px; margin-left: -6px; line-height: 18px; }
.side button, .actions button { width: 112px; height: 28px; border: 1px solid #707070; border-radius: 3px; background: linear-gradient(#f2f2f2, #ebebeb 48%, #dddddd 52%, #cfcfcf); box-shadow: inset 0 0 0 1px #fcfcfc; }
.side button:disabled { border-color: #adb2b5; background: #f4f4f4; color: #838383; }
.actions { display: flex; justify-content: flex-end; gap: 10px; margin-top: 14px; }
.actions .ok { border-color: #3c7fb1; background: linear-gradient(#eaf6fd, #d9f0fc 48%, #bee6fd 52%, #a7d9f5); box-shadow: inset 0 0 0 2px #2fd0f5; }
```
